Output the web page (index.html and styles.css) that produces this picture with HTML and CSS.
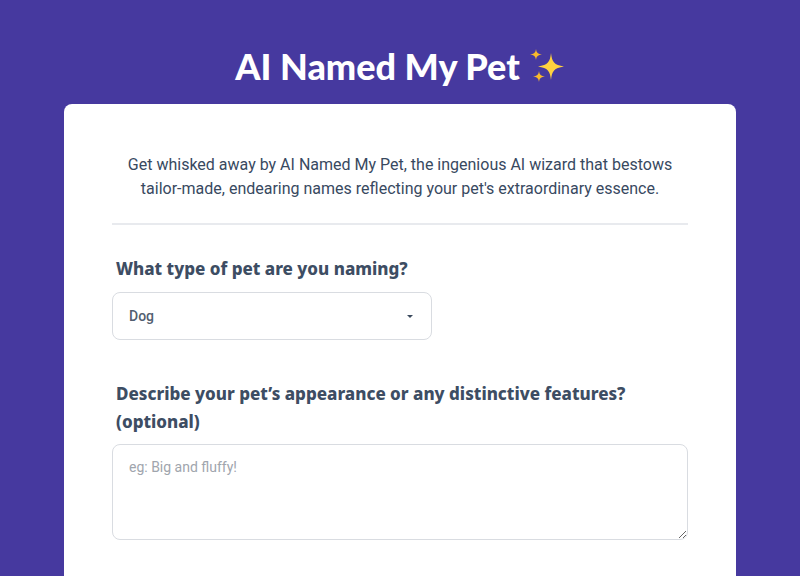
FILE: index.html
```html
<!DOCTYPE html>
<html lang="en">
<head>
    <meta charset="UTF-8">
    <meta name="viewport" content="width=device-width, initial-scale=1.0">
    <title>AI Named My Pet</title>
    <link rel="stylesheet" href="styles.css">
</head>
<body>
    <header class="site-header">
        <h1>AI Named My Pet</h1>
        <svg class="sparkles" viewBox="0 0 36 36" aria-hidden="true">
            <path fill="#ffd23f" d="M22 5 C23 14 25 17 35 18.500 C25 20 23 23 22 32 C21 23 19 20 9 18.500 C19 17 21 14 22 5Z"/>
            <path fill="#f9b92c" d="M7 1 C7.500 5 9 6 13 6.500 C9 7 7.500 8 7 12 C6.500 8 5 7 1 6.500 C5 6 6.500 5 7 1Z"/>
            <path fill="#f9b92c" d="M10 23 C10.500 27 12 28 16 28.500 C12 29 10.500 30 10 34 C9.500 30 8 29 4 28.500 C8 28 9.500 27 10 23Z"/>
        </svg>
    </header>

    <main class="card">
        <p class="intro">Get whisked away by AI Named My Pet, the ingenious AI wizard that bestows tailor-made, endearing names reflecting your pet's extraordinary essence.</p>
        <hr class="divider">

        <form class="pet-form">
            <div class="field">
                <label class="field-label" for="pet-type">What type of pet are you naming?</label>
                <div class="select-wrap">
                    <select id="pet-type" class="select-input">
                        <option>Dog</option>
                        <option>Cat</option>
                        <option>Bird</option>
                    </select>
                </div>
            </div>

            <div class="field">
                <label class="field-label" for="pet-looks">Describe your pet’s appearance or any distinctive features? (optional)</label>
                <textarea id="pet-looks" class="text-input" placeholder="eg: Big and fluffy!"></textarea>
            </div>
        </form>
    </main>
</body>
</html>
```

FILE: styles.css
```css
* {
    box-sizing: border-box;
    margin: 0;
    padding: 0;
}

body {
    background-color: #46399f;
    font-family: 'Roboto', 'Liberation Sans', sans-serif;
    color: #38495f;
}

.site-header {
    display: flex;
    justify-content: center;
    align-items: center;
    gap: 9px;
    height: 104px;
    padding-top: 28px;
}

.site-header h1 {
    color: white;
    font-family: 'Lato', 'Noto Sans', sans-serif;
    font-size: 36px;
    font-weight: 900;
    line-height: 44px;
}

.sparkles {
    width: 36px;
    height: 36px;
}

.card {
    width: 672px;
    margin: 0 auto;
    padding: 49px 48px 80px;
    background-color: white;
    border-radius: 8px;
}

.intro {
    font-size: 16px;
    line-height: 24px;
    text-align: center;
}

.divider {
    height: 2px;
    margin-top: 22px;
    border: none;
    background-color: #e8eaee;
}

.field {
    margin-top: 30px;
}

.field + .field {
    margin-top: 40px;
}

.field-label {
    display: block;
    padding: 0 4px;
    margin-bottom: 10px;
    font-family: 'Noto Sans', 'Lato', sans-serif;
    font-size: 17px;
    font-weight: 800;
    line-height: 27px;
    color: #3d4d63;
}

.field + .field .field-label {
    margin-bottom: 8px;
    line-height: 28px;
}

.select-wrap {
    position: relative;
    width: 320px;
}

.select-wrap::after {
    content: '';
    position: absolute;
    top: 23px;
    right: 19px;
    border-top: 3px solid #3b4a5e;
    border-left: 3.500px solid transparent;
    border-right: 3.500px solid transparent;
}

.select-input {
    display: block;
    width: 100%;
    height: 48px;
    padding: 0 16px;
    appearance: none;
    background-color: white;
    border: 1px solid #d9dce1;
    border-radius: 8px;
    font-family: inherit;
    font-size: 14px;
    font-weight: 500;
    color: #525e70;
}

.text-input {
    display: block;
    width: 100%;
    height: 96px;
    padding: 12px 16px;
    border: 1px solid #d9dce1;
    border-radius: 8px;
    font-family: inherit;
    font-size: 14px;
    line-height: 20px;
    color: #525e70;
}

.text-input::placeholder {
    color: #a0a5ad;
}
```
